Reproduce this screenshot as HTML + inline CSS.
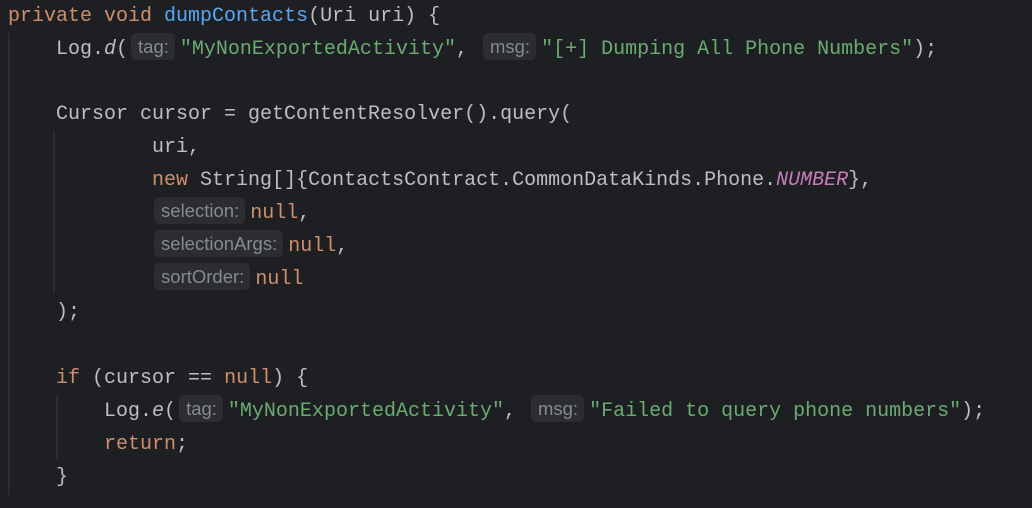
<!DOCTYPE html>
<html><head><meta charset="utf-8"><style>
body{margin:0;background:#1e1f22;width:1032px;height:508px;overflow:hidden;position:relative;font-family:"Liberation Mono",monospace;font-size:20px;color:#bcbec4}
.l{position:absolute;left:8px;height:33px;line-height:33px;white-space:pre}
.k{color:#cf8e6d}.f{color:#56a8f5}.s{color:#6aab73}.n{color:#c77dbb;font-style:italic}.i{font-style:italic}
.h{display:inline-block;background:#2b2d30;color:#868a91;font-family:"Liberation Sans",sans-serif;font-size:18.5px;line-height:27px;height:27px;padding:0 6px 0 7px;border-radius:5px;margin:0 5px 0 3px;vertical-align:1px}
.g{position:absolute;width:2px;background:#2b2d30}
</style></head><body>
<div class="g" style="left:8px;top:33px;height:462px"></div>
<div class="g" style="left:53px;top:131px;height:162px"></div>
<div class="g" style="left:56px;top:395px;height:65px"></div>
<div class="l" style="top:0px"><span class="k">private void </span><span class="f">dumpContacts</span>(Uri uri) {</div>
<div class="l" style="top:33px">    Log.<span class="i">d</span>(<span class="h">tag:</span><span class="s">"MyNonExportedActivity"</span>, <span class="h">msg:</span><span class="s">"[+] Dumping All Phone Numbers"</span>);</div>
<div class="l" style="top:98px">    Cursor cursor = getContentResolver().query(</div>
<div class="l" style="top:131px">            uri,</div>
<div class="l" style="top:164px">            <span class="k">new</span> String[]{ContactsContract.CommonDataKinds.Phone.<span class="n">NUMBER</span>},</div>
<div class="l" style="top:197px">            <span class="h" style="margin-left:2px">selection:</span><span class="k">null</span>,</div>
<div class="l" style="top:230px">            <span class="h" style="margin-left:2px">selectionArgs:</span><span class="k">null</span>,</div>
<div class="l" style="top:263px">            <span class="h" style="margin-left:2px">sortOrder:</span><span class="k">null</span></div>
<div class="l" style="top:296px">    );</div>
<div class="l" style="top:362px">    <span class="k">if</span> (cursor == <span class="k">null</span>) {</div>
<div class="l" style="top:395px">        Log.<span class="i">e</span>(<span class="h">tag:</span><span class="s">"MyNonExportedActivity"</span>, <span class="h">msg:</span><span class="s">"Failed to query phone numbers"</span>);</div>
<div class="l" style="top:428px">        <span class="k">return</span>;</div>
<div class="l" style="top:461px">    }</div>
</body></html>
